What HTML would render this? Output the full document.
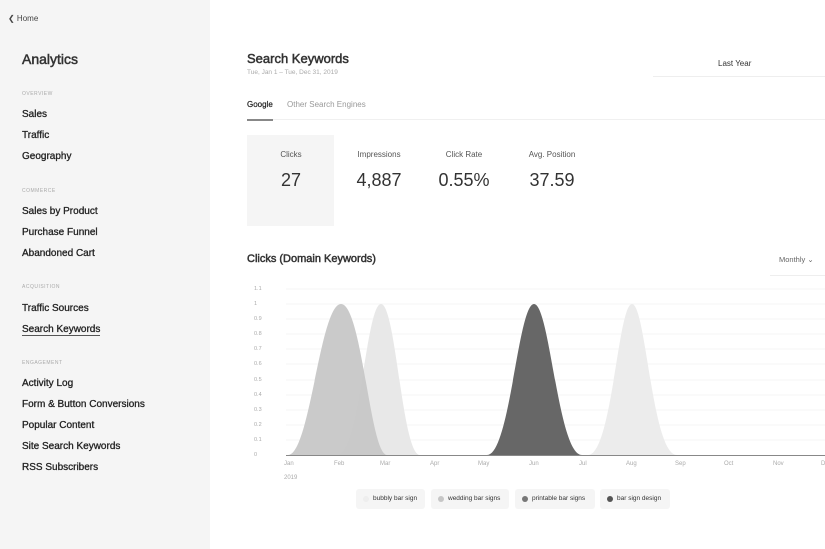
<!DOCTYPE html>
<html><head><meta charset="utf-8"><style>
*{margin:0;padding:0;box-sizing:border-box}
body{width:825px;height:549px;overflow:hidden;background:#fff;font-family:"Liberation Sans",sans-serif;color:#333;position:relative}
.sb{position:absolute;left:0;top:0;width:210px;height:549px;background:#f5f5f5}
.a{position:absolute;white-space:nowrap}
.nav{font-size:10px;color:#222;left:22px;-webkit-text-stroke:0.3px #222}
.sec{font-size:5px;color:#aaa;letter-spacing:.5px;left:22px}
.lbl{font-size:8px;color:#555;text-align:center;width:80px}
.num{font-size:18px;color:#333;text-align:center;width:80px}
.yl{font-size:5.5px;color:#aaa;left:254px}
.xl{font-size:6px;color:#aaa;top:461px}
.hd{-webkit-text-stroke:0.5px #333;color:#333}
.lg{position:absolute;top:489px;height:20px;background:#f5f5f5;border-radius:3px;font-size:6.5px;color:#333;line-height:20px;padding-left:17px}
.lg i{position:absolute;left:7px;top:7px;width:6px;height:6px;border-radius:50%}
</style></head><body>
<div class="sb"></div>
<div class="a" style="left:8px;top:14px;font-size:8px;color:#444">&#10094; Home</div>
<div class="a hd" style="left:22px;top:51px;font-size:14px">Analytics</div>
<div class="a sec" style="top:91px">OVERVIEW</div>
<div class="a nav" style="top:109px">Sales</div>
<div class="a nav" style="top:130px">Traffic</div>
<div class="a nav" style="top:151px">Geography</div>
<div class="a sec" style="top:188px">COMMERCE</div>
<div class="a nav" style="top:206px">Sales by Product</div>
<div class="a nav" style="top:227px">Purchase Funnel</div>
<div class="a nav" style="top:248px">Abandoned Cart</div>
<div class="a sec" style="top:284px">ACQUISITION</div>
<div class="a nav" style="top:303px">Traffic Sources</div>
<div class="a nav" style="top:324px;border-bottom:1.5px solid #555">Search Keywords</div>
<div class="a sec" style="top:360px">ENGAGEMENT</div>
<div class="a nav" style="top:378px">Activity Log</div>
<div class="a nav" style="top:399px">Form &amp; Button Conversions</div>
<div class="a nav" style="top:420px">Popular Content</div>
<div class="a nav" style="top:441px">Site Search Keywords</div>
<div class="a nav" style="top:462px">RSS Subscribers</div>

<div class="a hd" style="left:247px;top:51px;font-size:13px">Search Keywords</div>
<div class="a" style="left:247px;top:69px;font-size:6.5px;color:#aaa">Tue, Jan 1 – Tue, Dec 31, 2019</div>
<div class="a" style="left:718px;top:59px;font-size:8px;color:#333">Last Year</div>
<div class="a" style="left:653px;top:76px;width:172px;height:1px;background:#eee"></div>
<div class="a" style="left:247px;top:100px;font-size:8px;color:#222;-webkit-text-stroke:0.2px #222">Google</div>
<div class="a" style="left:287px;top:100px;font-size:8px;color:#999">Other Search Engines</div>
<div class="a" style="left:247px;top:119px;width:578px;height:1px;background:#f0f0f0"></div>
<div class="a" style="left:247px;top:119px;width:26px;height:2px;background:#888"></div>
<div class="a" style="left:247px;top:135px;width:87px;height:91px;background:#f5f5f5"></div>
<div class="a lbl" style="left:251px;top:150px">Clicks</div>
<div class="a num" style="left:251px;top:170px">27</div>
<div class="a lbl" style="left:339px;top:150px">Impressions</div>
<div class="a num" style="left:339px;top:170px">4,887</div>
<div class="a lbl" style="left:424px;top:150px">Click Rate</div>
<div class="a num" style="left:424px;top:170px">0.55%</div>
<div class="a lbl" style="left:512px;top:150px">Avg. Position</div>
<div class="a num" style="left:512px;top:170px">37.59</div>

<div class="a hd" style="left:247px;top:253px;font-size:11px">Clicks (Domain Keywords)</div>
<div class="a" style="left:779px;top:255px;font-size:7.5px;color:#666">Monthly &#8964;</div>
<div class="a" style="left:770px;top:275px;width:55px;height:1px;background:#eee"></div>

<svg class="a" style="left:0;top:0" width="825" height="549">
<g stroke="#f2f2f2" stroke-width="0.7">
<line x1="286" y1="289" x2="825" y2="289"/><line x1="286" y1="304" x2="825" y2="304"/><line x1="286" y1="319" x2="825" y2="319"/><line x1="286" y1="334" x2="825" y2="334"/><line x1="286" y1="349" x2="825" y2="349"/><line x1="286" y1="364" x2="825" y2="364"/><line x1="286" y1="380" x2="825" y2="380"/><line x1="286" y1="395" x2="825" y2="395"/><line x1="286" y1="410" x2="825" y2="410"/><line x1="286" y1="425" x2="825" y2="425"/><line x1="286" y1="440" x2="825" y2="440"/>
</g>
<path d="M337 455 C360 455 366 304 381 304 C396 304 402 455 420 455Z" fill="#e8e8e8"/>
<path d="M288 455 C310 455 320 304 341 304 C362 304 370 455 387 455Z" fill="#c6c6c6" fill-opacity=".92"/>
<path d="M487 455 C510 455 518 304 534 304 C550 304 558 455 582 455Z" fill="#676767"/>
<path d="M588 455 C612 455 618 304 632 304 C646 304 652 455 677 455Z" fill="#ececec"/>
<line x1="286" y1="455.5" x2="825" y2="455.5" stroke="#888" stroke-width="1"/>
</svg>
<div class="a yl" style="top:286px">1.1</div>
<div class="a yl" style="top:301px">1</div>
<div class="a yl" style="top:316px">0.9</div>
<div class="a yl" style="top:331px">0.8</div>
<div class="a yl" style="top:346px">0.7</div>
<div class="a yl" style="top:361px">0.6</div>
<div class="a yl" style="top:377px">0.5</div>
<div class="a yl" style="top:392px">0.4</div>
<div class="a yl" style="top:407px">0.3</div>
<div class="a yl" style="top:422px">0.2</div>
<div class="a yl" style="top:437px">0.1</div>
<div class="a yl" style="top:452px">0</div>
<div class="a xl" style="left:284px">Jan</div>
<div class="a xl" style="left:334px">Feb</div>
<div class="a xl" style="left:380px">Mar</div>
<div class="a xl" style="left:430px">Apr</div>
<div class="a xl" style="left:478px">May</div>
<div class="a xl" style="left:529px">Jun</div>
<div class="a xl" style="left:579px">Jul</div>
<div class="a xl" style="left:626px">Aug</div>
<div class="a xl" style="left:675px">Sep</div>
<div class="a xl" style="left:724px">Oct</div>
<div class="a xl" style="left:773px">Nov</div>
<div class="a xl" style="left:821px">Dec</div>
<div class="a xl" style="left:284px;top:475px">2019</div>
<div class="lg" style="left:356px;width:69px"><i style="background:#eee"></i>bubbly bar sign</div>
<div class="lg" style="left:431px;width:78px"><i style="background:#c6c6c6"></i>wedding bar signs</div>
<div class="lg" style="left:515px;width:80px"><i style="background:#777"></i>printable bar signs</div>
<div class="lg" style="left:600px;width:70px"><i style="background:#555"></i>bar sign design</div>
</body></html>
